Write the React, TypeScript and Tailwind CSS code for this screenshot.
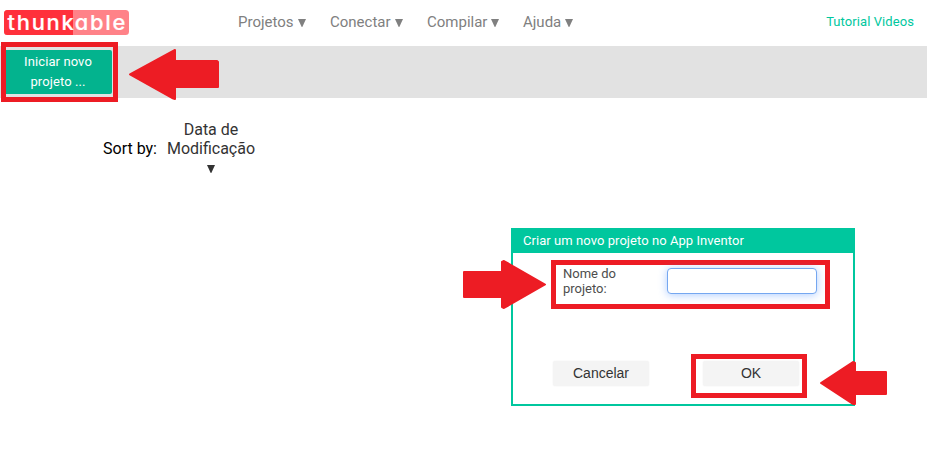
import React from 'react';

const menus = [
  { label: 'Projetos', width: 'w-[92px]' },
  { label: 'Conectar', width: 'w-[97px]' },
  { label: 'Compilar', width: 'w-[96px]' },
  { label: 'Ajuda', width: 'w-[60px]' },
];

function Caret({ className = '' }: { className?: string }) {
  return (
    <svg className={className} width="8" height="8" viewBox="0 0 8 8" fill="currentColor" aria-hidden="true">
      <path d="M0 0H8L4.3 8H3.7Z" />
    </svg>
  );
}

function Logo() {
  return (
    <svg className="mt-[10px] ml-1 h-[25px] w-[125px] shrink-0" viewBox="0 0 125 25">
      <rect width="125" height="25" rx="3.5" fill="#ff8288" />
      <path d="M69 0H3.5A3.5 3.5 0 0 0 0 3.5V21.5A3.5 3.5 0 0 0 3.5 25H69Z" fill="#ff303b" />
      <text
        x="3.6"
        y="19.5"
        fill="white"
        stroke="white"
        strokeWidth="0.2"
        textLength="119.5"
        lengthAdjust="spacingAndGlyphs"
        className="font-['Inter',sans-serif] text-[20.5px] font-medium tracking-[1.6px] [font-feature-settings:'cv11']"
      >
        thunkable
      </text>
    </svg>
  );
}

function Arrow({ className, box, d }: { className: string; box: string; d: string }) {
  return (
    <svg className={`absolute ${className}`} viewBox={box} fill="#ed1c24" aria-hidden="true">
      <path d={d} stroke="#ed1c24" strokeWidth="2" strokeLinejoin="round" />
    </svg>
  );
}

function Dialog() {
  return (
    <section className="mt-[53px] ml-[511px] h-[178px] w-[344px] border-2 border-[#00c79e] bg-white">
      <h2 className="h-[23px] bg-[#00c79e] pl-[10px] text-[13px] leading-[22px] tracking-[0.06px] text-white">
        Criar um novo projeto no App Inventor
      </h2>
      <div className="mt-[7px] ml-[38px] flex h-[49px] w-[279px] border-[5px] border-[#ed1c24]">
        <label htmlFor="name" className="mt-px ml-[7px] w-[104px] pr-8 text-[13px] leading-[15px] text-[#4d4d4d]">
          Nome do projeto:
        </label>
        <input
          id="name"
          className="mt-[3px] h-[26px] w-[150px] rounded-[4px] border border-[#75a7f0] bg-white shadow-[0_1px_8px_rgba(77,144,254,0.45)] outline-none"
        />
      </div>
      <div className="mt-[45px] ml-10 flex font-['Liberation_Sans',Arial,sans-serif] text-[14px] text-[#333]">
        <button className="mt-[7px] h-[25px] w-24 rounded-[2px] bg-[#f4f4f4] leading-[25px] shadow-[0_0_2px_#f0f0f0]">Cancelar</button>
        <div className="ml-[42px] h-11 w-[116px] border-[5px] border-[#ed1c24] pt-[2px] pl-[7px]">
          <button className="block h-[25px] w-24 rounded-[2px] bg-[#f4f4f4] leading-[25px] shadow-[0_0_2px_#f0f0f0]">OK</button>
        </div>
      </div>
    </section>
  );
}

export default function App() {
  return (
    <main className="relative h-[460px] w-[927px] overflow-hidden bg-white font-['Roboto',sans-serif]">
      <header className="flex h-[46px]">
        <Logo />
        <nav className="ml-[109px] flex pt-3 text-[15px] leading-5 text-[#808080]">
          {menus.map(({ label, width }) => (
            <a key={label} className={`${width} flex shrink-0 whitespace-nowrap`}>
              {label}
              <Caret className="mt-[6.5px] ml-[4px]" />
            </a>
          ))}
        </nav>
        <a className="mt-[14px] mr-[13px] ml-auto text-[13px] leading-4 tracking-[0.08px] text-[#00c79e]">Tutorial Videos</a>
      </header>
      <div className="flex h-[52px] items-start bg-[#e2e2e2] pl-px">
        <div className="-mt-1 h-[60px] w-[117px] border-[5px] border-[#ed1c24] pt-[3px]">
          <button className="block h-11 w-[106px] rounded-r-[2px] bg-[#03b38e] pr-[13px] pl-[11px] text-[13px] leading-5 tracking-[0.1px] text-white">
            Iniciar novo projeto ...
          </button>
        </div>
      </div>
      <div className="flex h-[77px] items-start pt-[22px] pl-[103px] text-[16px] leading-[19px]">
        <span className="mt-[19px] text-black">Sort by:</span>
        <div className="ml-[10px] flex w-[88px] flex-col items-center text-center text-[#333]">
          <span>Data de</span>
          <span>Modificação</span>
          <Caret className="mt-[7px]" />
        </div>
      </div>
      <Dialog />
      <Arrow
        className="top-[48px] left-[128px] h-[53px] w-[92px]"
        box="128 48 92 53"
        d="M130 74.5L175 50V61H217L218 62V87H175V99L172 98Z"
      />
      <Arrow
        className="top-[259px] left-[462px] h-[51px] w-[85px]"
        box="462 259 85 51"
        d="M545 284.5L504 261L502 262V272H464V297H502V307L504 308Z"
      />
      <Arrow
        className="top-[360px] left-[819px] h-[46px] w-[69px]"
        box="819 360 69 46"
        d="M821 383L853 362L855 363V372H886V394H855V404L853 404Z"
      />
    </main>
  );
}
